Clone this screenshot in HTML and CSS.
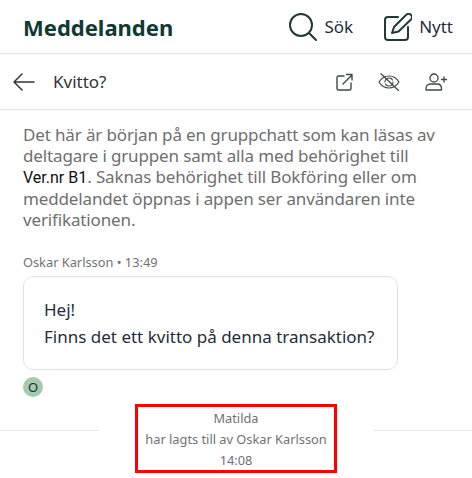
FILE: index.html
```html
<!DOCTYPE html>
<html lang="sv">
<head>
    <meta charset="UTF-8">
    <meta name="viewport" content="width=device-width, initial-scale=1.0">
    <title>Meddelanden</title>
    <link rel="stylesheet" href="styles.css">
</head>
<body>
    <!-- Sidhuvud -->
    <div class="topbar">
        <h1>Meddelanden</h1>
        <div class="topbar-actions">
            <a class="action action-search">
                <svg width="28" height="28" viewBox="0 0 28 28" fill="none" stroke="#1f3a34" stroke-width="2" stroke-linecap="round">
                    <circle cx="12" cy="12" r="11"/>
                    <path d="M20 20l7 7"/>
                </svg>
                Sök
            </a>
            <a class="action">
                <svg width="28" height="28" viewBox="0 0 28 28" fill="none" stroke="#1f3a34" stroke-width="2" stroke-linecap="round" stroke-linejoin="round">
                    <path d="M14 4H4a3 3 0 0 0-3 3v17a3 3 0 0 0 3 3h17a3 3 0 0 0 3-3V14"/>
                    <path d="M8 20l2-6L22 2a2.800 2.800 0 0 1 5 4.500L14.500 18.500z"/>
                </svg>
                Nytt
            </a>
        </div>
    </div>

    <!-- Konversation -->
    <div class="subbar">
        <svg class="back" width="22" height="18" viewBox="0 0 22 18" fill="none" stroke="#333" stroke-width="1.500" stroke-linecap="round" stroke-linejoin="round">
            <path d="M21 9H1M9 1L1 9l8 8"/>
        </svg>
        <span class="subject">Kvitto?</span>
        <div class="subbar-icons">
            <svg width="17" height="18" viewBox="0 0 17 18" fill="none" stroke="#3c4a46" stroke-width="1.400" stroke-linecap="round" stroke-linejoin="round">
                <path d="M8 3H2.500A1.500 1.500 0 0 0 1 4.500v11A1.500 1.500 0 0 0 2.500 17h11a1.500 1.500 0 0 0 1.500-1.500V10"/>
                <path d="M7 11L16 2M10.500 1.500h5.500v5.500"/>
            </svg>
            <svg width="22" height="18" viewBox="0 0 22 18" fill="none" stroke="#3c4a46" stroke-width="1.200" stroke-linecap="round" stroke-linejoin="round">
                <path d="M1 9c2.500-4 5.800-6 10-6s7.500 2 10 6c-2.500 4-5.800 6-10 6s-7.500-2-10-6z"/>
                <path d="M7 9a4 4 0 0 1 4-4c1.500 0 3 .8 3.500 2M15 9a4 4 0 0 1-4 4c-1.500 0-3-.8-3.500-2"/>
                <path d="M3 .7L20.500 17.500"/>
            </svg>
            <svg width="22" height="18" viewBox="0 0 22 18" fill="none" stroke="#3c4a46" stroke-width="1.300" stroke-linecap="round" stroke-linejoin="round">
                <circle cx="9" cy="5" r="4"/>
                <path d="M1 17v-1.500C1 12.500 3.500 11 6 11h6c2.500 0 4.500 1.500 4.500 4.500V17z"/>
                <path d="M19 4v5M16.500 6.500h5"/>
            </svg>
        </div>
    </div>

    <div class="content">
        <p class="intro">Det här är början på en gruppchatt som kan läsas av<br>
        deltagare i gruppen samt alla med behörighet till<br>
        <span class="ver">Ver.nr B1</span>. Saknas behörighet till Bokföring eller om<br>
        meddelandet öppnas i appen ser användaren inte<br>
        verifikationen.</p>

        <div class="meta">Oskar Karlsson • 13:49</div>
        <div class="bubble">
            <div>Hej!</div>
            <div>Finns det ett kvitto på denna transaktion?</div>
        </div>
        <div class="avatar">O</div>
    </div>

    <!-- Systemmeddelande -->
    <div class="system">
        <div class="rule"></div>
        <div class="system-middle">
            <div class="system-box">
                <div>Matilda</div>
                <div>har lagts till av Oskar Karlsson</div>
                <div>14:08</div>
            </div>
        </div>
        <div class="rule"></div>
    </div>
</body>
</html>
```

FILE: styles.css
```css
body {
    font-family: "Noto Sans", Arial, sans-serif;
    margin: 0;
    padding: 0;
    background-color: #fff;
    color: #1f2d3a;
}

.topbar {
    display: flex;
    justify-content: space-between;
    align-items: center;
    height: 53px;
    padding: 0 19px 0 23px;
    border-bottom: 1px solid #e2e2e2;
}
h1 {
    margin: 0;
    font-size: 22px;
    font-weight: 700;
    color: #0f3a34;
}
.topbar-actions {
    display: flex;
    gap: 31px;
}
.action {
    display: flex;
    align-items: center;
    gap: 7px;
    font-size: 17px;
}

.subbar {
    display: flex;
    align-items: center;
    height: 55px;
    padding: 0 25px 0 13px;
    border-bottom: 1px solid #e2e2e2;
}
.subject {
    margin-left: 18px;
    font-size: 17px;
    color: #333;
}
.subbar-icons {
    display: flex;
    align-items: center;
    gap: 25px;
    margin-left: auto;
}

.content {
    padding: 14px 23px 0;
}
.intro {
    margin: 0;
    font-size: 17px;
    letter-spacing: -0.140px;
    line-height: 21px;
    white-space: nowrap;
    color: #6f6f6f;
}
.ver {
    font-family: Roboto, sans-serif;
    font-size: 16px;
    letter-spacing: 0;
    color: #111;
}
.meta {
    margin-top: 24px;
    font-size: 12.800px;
    line-height: 16px;
    color: #6f7275;
}
.bubble {
    margin-top: 6px;
    width: 375px;
    box-sizing: border-box;
    padding: 19px 20px 19px;
    border: 1px solid #e2e2e2;
    border-radius: 10px;
    font-size: 17px;
    line-height: 27px;
}
.avatar {
    display: flex;
    align-items: center;
    justify-content: center;
    width: 20px;
    height: 20px;
    margin-top: 7px;
    border-radius: 50%;
    background-color: #a4cbae;
    font-size: 13px;
}

.system {
    display: flex;
    align-items: flex-start;
    margin-top: 7px;
}
.rule {
    flex: 1;
    height: 1px;
    margin-top: 26px;
    background-color: #e6e6e6;
}
.system-middle {
    display: flex;
    justify-content: center;
    width: 275px;
}
.system-box {
    box-sizing: border-box;
    width: 202px;
    height: 69px;
    padding: 1px 0;
    border: 3px solid #f00;
    font-size: 12.800px;
    line-height: 21px;
    text-align: center;
    color: #6f7275;
}
```
